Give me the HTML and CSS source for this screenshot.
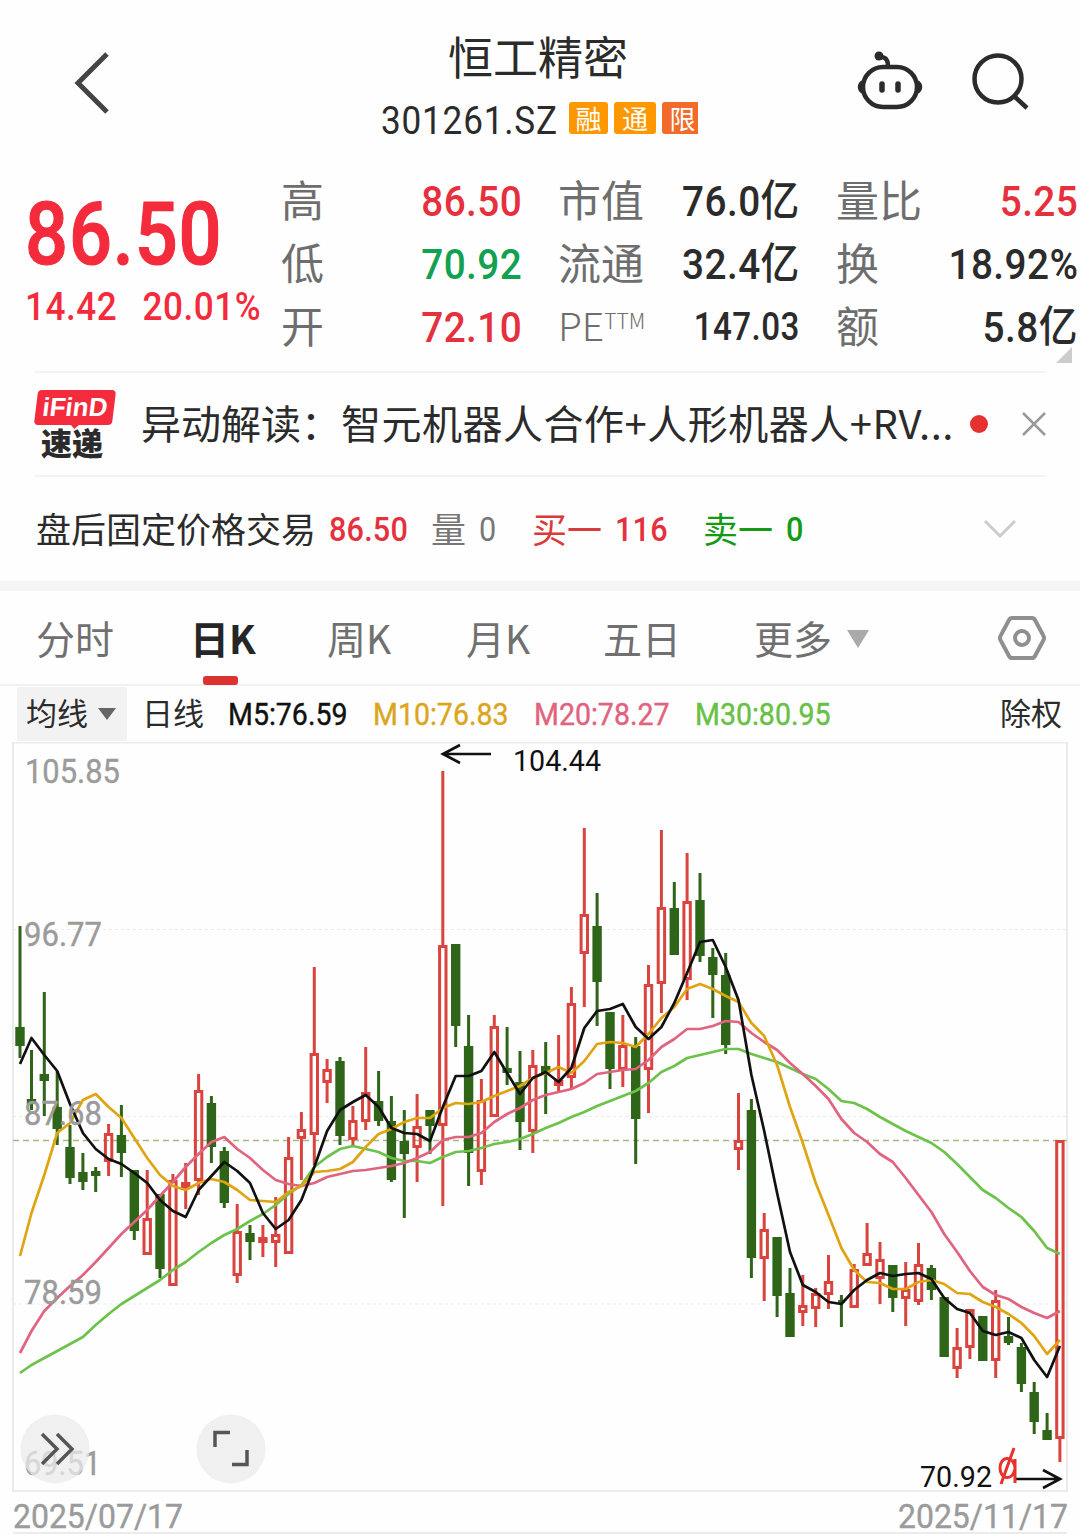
FILE: index.html
```html
<!DOCTYPE html>
<html lang="zh-CN">
<head>
    <meta charset="UTF-8">
    <meta name="viewport" content="width=device-width, initial-scale=1.0">
    <title>恒工精密 301261.SZ</title>
    <link rel="stylesheet" href="styles.css">
</head>
<body>
    <header class="header">
        <svg class="back" width="40" height="64" viewBox="0 0 40 64"><path d="M35 3L6 32l29 29"/></svg>
        <div class="title">
            <h1>恒工精密</h1>
            <div class="code">
                <span class="num">301261.SZ</span>
                <span class="tag">融</span>
                <span class="tag">通</span>
                <span class="tag tag-limit">限</span>
            </div>
        </div>
        <div class="actions">
            <svg width="66" height="60" viewBox="0 0 66 60">
                <rect x="6" y="16" width="54" height="40" rx="20"/>
                <path d="M31 15c0-6-2-9-8-9"/>
                <circle class="solid" cx="22" cy="5" r="4.500"/>
                <path class="solid" d="M6 29c-7 2-7 12 0 14zM60 29c7 2 7 12 0 14z"/>
                <path class="eye" d="M25 33v6M41 33v6"/>
            </svg>
            <svg width="60" height="60" viewBox="0 0 60 60">
                <circle cx="27" cy="28" r="23.500"/>
                <path d="M43 45l13 12"/>
            </svg>
        </div>
    </header>

    <section class="quote">
        <div class="price">
            <div class="last num">86.50</div>
            <div class="change num"><span>14.42</span><span>20.01%</span></div>
        </div>
        <dl class="stats">
            <div><dt>高</dt><dd class="num up">86.50</dd></div>
            <div><dt>市值</dt><dd class="num">76.0亿</dd></div>
            <div><dt>量比</dt><dd class="num up">5.25</dd></div>
            <div><dt>低</dt><dd class="num down">70.92</dd></div>
            <div><dt>流通</dt><dd class="num">32.4亿</dd></div>
            <div><dt>换</dt><dd class="num">18.92%</dd></div>
            <div><dt>开</dt><dd class="num up">72.10</dd></div>
            <div><dt class="pe">PE<sup>TTM</sup></dt><dd class="num small">147.03</dd></div>
            <div><dt>额</dt><dd class="num">5.8亿</dd></div>
        </dl>
        <i class="corner"></i>
    </section>

    <section class="news">
        <div class="logo"><b>iFinD</b><span>速递</span></div>
        <p>异动解读：<span>智元机器人合作+人形机器人+RV...</span></p>
        <i class="dot"></i>
        <svg class="close" width="24" height="24" viewBox="0 0 24 24"><path d="M1 1l22 22M23 1L1 23"/></svg>
    </section>

    <section class="after">
        <span>盘后固定价格交易</span>
        <span class="num up">86.50</span>
        <span class="muted">量</span>
        <span class="num muted">0</span>
        <span class="buy">买一</span>
        <span class="num up">116</span>
        <span class="sell">卖一</span>
        <span class="num sell">0</span>
        <svg width="36" height="22" viewBox="0 0 36 22"><path d="M3 3l15 15L33 3"/></svg>
    </section>

    <nav class="tabs">
        <a>分时</a>
        <a class="active">日K</a>
        <a>周K</a>
        <a>月K</a>
        <a>五日</a>
        <a>更多<i class="caret"></i></a>
        <svg width="48" height="46" viewBox="0 0 48 46">
            <path d="M14 3h20q2 0 3 2l8 15q2 3 0 6l-8 15q-1 2-3 2H14q-2 0-3-2L3 26q-2-3 0-6l8-15q1-2 3-2z"/>
            <circle cx="24" cy="23" r="7"/>
        </svg>
    </nav>

    <div class="legend">
        <span class="select">均线<i class="caret"></i></span>
        <span>日线</span>
        <span class="num m5">M5:76.59</span>
        <span class="num m10">M10:76.83</span>
        <span class="num m20">M20:78.27</span>
        <span class="num m30">M30:80.95</span>
        <span>除权</span>
    </div>

    <svg class="chart" id="chart" width="1080" height="792" viewBox="0 742 1080 792">
        <g class="frame">
            <path d="M13 742.500H1067V1491H13zM13 1533H1067"/>
            <path class="grid" d="M13 929.500H1067M13 1116.500H1067M13 1304H1067"/>
            <path class="now" d="M13 1140.500H1067"/>
        </g>
        <g id="candles"></g>
        <g id="lines"></g>
        <g class="axis">
            <text x="25" y="783" textLength="95" lengthAdjust="spacingAndGlyphs">105.85</text>
            <text x="24" y="946" textLength="78" lengthAdjust="spacingAndGlyphs">96.77</text>
            <text x="24" y="1125" textLength="78" lengthAdjust="spacingAndGlyphs">87.68</text>
            <text x="24" y="1304" textLength="78" lengthAdjust="spacingAndGlyphs">78.59</text>
            <text x="24" y="1475" textLength="77" lengthAdjust="spacingAndGlyphs">69.51</text>
            <text x="13" y="1528" textLength="170" lengthAdjust="spacingAndGlyphs">2025/07/17</text>
            <text x="898" y="1528" textLength="170" lengthAdjust="spacingAndGlyphs">2025/11/17</text>
        </g>
        <g class="mark">
            <text x="513" y="771" textLength="88" lengthAdjust="spacingAndGlyphs">104.44</text>
            <path d="M491 754H443M460 745L443 754l17 9"/>
            <text x="920" y="1487" textLength="72" lengthAdjust="spacingAndGlyphs">70.92</text>
            <path d="M1015 1479h44M1043 1470l17 9-17 9"/>
        </g>
        <path class="event" d="M1001 1484L1014 1448M1015 1459V1483M1015 1467C1012 1454 1000 1457 1000 1468S1012 1482 1015 1469"/>
        <g class="tool">
            <circle cx="55" cy="1449" r="34.500"/>
            <path d="M42 1434l15 15-15 15M57 1434l15 15-15 15"/>
            <circle cx="231" cy="1449" r="34.500"/>
            <path d="M215 1447V1432.500H230M247 1450V1464.500H232"/>
        </g>
    </svg>
    <script src="chart.js"></script>
</body>
</html>
```
FILE: styles.css
```css
* {
    box-sizing: border-box;
}
body {
    margin: 0;
    width: 1080px;
    height: 1534px;
    overflow: hidden;
    background: #fefefe;
    color: #2b2b2b;
    font-family: "Noto Sans CJK SC", sans-serif;
}
svg {
    display: block;
    fill: none;
}
/* digits are set slightly condensed */
.num {
    font-family: Roboto, "Noto Sans CJK SC", sans-serif;
    font-weight: 500;
    white-space: nowrap;
    transform: scaleX(0.9);
    transform-origin: left;
}
.up {
    color: #e5303e;
}
.down {
    color: #12a150;
}
.caret {
    display: inline-block;
    border: 11px solid transparent;
    border-top: 18px solid #aaa;
    border-bottom: 0;
}

/* header */
.header {
    display: grid;
    grid-template-columns: 340px 400px 1fr;
    height: 170px;
}
.back {
    margin: 51px 0 0 72px;
    stroke: #444;
    stroke-width: 5;
}
.title {
    padding-top: 26px;
    text-align: center;
}
.title h1 {
    margin: 0 4px 0 0;
    font-size: 45px;
    font-weight: 400;
    line-height: 60px;
}
.code {
    display: flex;
    align-items: center;
    height: 64px;
    padding-left: 41px;
}
.code .num {
    width: 188px;
    padding-top: 5px;
    font-size: 39px;
    font-weight: 400;
    letter-spacing: 0.9px;
    text-align: left;
}
.tag {
    width: 39px;
    height: 32px;
    margin-right: 6px;
    border-radius: 3px;
    background: #ff9800;
    color: #fff;
    font-size: 26px;
    line-height: 31px;
}
.tag:nth-child(3) {
    width: 42px;
}
.tag-limit {
    width: 36px;
    margin-right: 0;
    padding-left: 5px;
    border-radius: 3px 0 0 3px;
    background: #f26b2b;
}
.actions {
    display: flex;
    gap: 48px;
    padding: 51px 0 0 117px;
    stroke: #2b2b2b;
    stroke-width: 4.5;
}
.actions .solid {
    fill: #2b2b2b;
    stroke: none;
}
.actions .eye {
    stroke-width: 5.5;
    stroke-linecap: round;
}

/* quote */
.quote {
    position: relative;
    display: flex;
    height: 201px;
    padding-left: 25px;
}
.price {
    width: 256px;
    padding-top: 18px;
    color: #f32b3c;
}
.last {
    font-size: 87px;
    letter-spacing: 1px;
    line-height: 92px;
    transform: scaleX(0.87);
    -webkit-text-stroke: 1.2px;
}
.change {
    display: flex;
    gap: 28px;
    font-size: 39px;
    letter-spacing: 0.6px;
    line-height: 54px;
}
.stats {
    display: grid;
    grid-template-columns: 241px 242px 242px;
    grid-auto-rows: 63px;
    column-gap: 36px;
    margin: 0;
}
.stats div {
    display: flex;
    align-items: center;
    justify-content: space-between;
    line-height: 63px;
}
.stats dt {
    margin-top: -6px;
    color: #6e6e6e;
    font-size: 43px;
}
.stats dd {
    margin: 0;
    font-size: 43px;
    letter-spacing: 0.5px;
    transform-origin: right;
}
.stats .small {
    font-size: 39px;
    transform: scaleX(0.85);
}
.stats .pe {
    font-size: 39px;
    font-weight: 300;
}
.pe sup {
    font-size: 21px;
    line-height: 0;
    vertical-align: 12px;
}
.corner {
    position: absolute;
    right: 8px;
    bottom: 8px;
    border: 8px solid;
    border-color: transparent #ccc #ccc transparent;
}

/* news */
.news {
    display: flex;
    align-items: center;
    height: 106px;
    margin: 0 34px 0 35px;
    border-top: 2px solid #f3f3f3;
    border-bottom: 2px solid #f3f3f3;
}
.logo {
    flex: none;
    width: 81px;
    margin-right: 25px;
}
.logo b {
    display: block;
    width: 78px;
    height: 35px;
    margin-left: 1px;
    border-radius: 4px;
    background: #f32b3c;
    color: #fff;
    font: 700 26px/35px "Liberation Sans", sans-serif;
    text-align: center;
    transform: skewX(-7deg);
}
.logo b::after {
    content: "";
    position: absolute;
    left: 36px;
    top: 34px;
    border: 5px solid transparent;
    border-top-color: #f32b3c;
    border-bottom: 0;
}
.logo span {
    display: block;
    padding-left: 6px;
    font-size: 31px;
    font-weight: 900;
    line-height: 34px;
}
.news p {
    flex: none;
    width: 814px;
    margin: -5px 0 0;
    font-size: 40px;
    white-space: nowrap;
}
.news p span {
    letter-spacing: 0.5px;
}
.dot {
    flex: none;
    width: 18px;
    height: 18px;
    margin: 0 34px 0 15px;
    border-radius: 50%;
    background: #e53230;
}
.close {
    flex: none;
    stroke: #999;
    stroke-width: 2.5;
}

/* after-hours */
.after {
    display: grid;
    grid-template-columns: 293px 102px 48px 53px 83px 88px 83px 196px 36px;
    align-items: center;
    height: 114px;
    padding-left: 36px;
    border-bottom: 10px solid #f4f4f4;
    font-size: 35px;
    white-space: nowrap;
}
.after > span:not(.num) {
    margin-top: -4px;
}
.after .num {
    font-size: 34px;
    letter-spacing: 0.2px;
}
.after .muted {
    color: #777;
    font-weight: 400;
}
.after .buy {
    color: #d93a3a;
}
.after .sell {
    color: #149a14;
}
.after svg {
    stroke: #ccc;
    stroke-width: 3;
}

/* tabs */
.tabs {
    display: grid;
    grid-template-columns: 154px 137px 139px 137px 151px 244px 48px;
    align-items: center;
    height: 95px;
    padding-left: 36px;
    border-bottom: 2px solid #f1f1f1;
}
.tabs a {
    position: relative;
    color: #707070;
    font-size: 39px;
    line-height: 93px;
}
.tabs .active {
    color: #262626;
    font-weight: 700;
}
.tabs .active::after {
    content: "";
    position: absolute;
    left: 13px;
    bottom: -1px;
    width: 35px;
    height: 9px;
    border-radius: 3px;
    background: #dc3232;
}
.tabs .caret {
    margin: 0 0 6px 15px;
}
.tabs svg {
    stroke: #8f8f8f;
    stroke-width: 4;
}

/* moving averages */
.legend {
    display: grid;
    grid-template-columns: 125px 86px 145px 161px 161px 305px auto;
    align-items: center;
    height: 56px;
    padding-left: 17px;
    font-size: 31px;
    white-space: nowrap;
}
.legend > span:not(.num) {
    line-height: 50px;
    height: 54px;
}
.legend .num {
    font-weight: 400;
    transform: scaleX(0.92);
    -webkit-text-stroke: 0.4px;
}
.legend .select {
    width: 110px;
    height: 50px;
    padding-left: 9px;
    background: #f2f2f2;
    line-height: 47px;
}
.select .caret {
    margin: 0 0 5px 10px;
    border-width: 12px 9px 0;
    border-top-color: #666;
}
.m5 {
    color: #111;
}
.m10 {
    color: #dba51c;
}
.m20 {
    color: #e0637f;
}
.m30 {
    color: #68c045;
}

/* chart */
.chart {
    font-family: Roboto, sans-serif;
}
.frame {
    stroke: #ebebeb;
    stroke-width: 2;
}
.frame .grid {
    stroke-width: 1;
    stroke-dasharray: 3 3;
}
.frame .now {
    stroke: #a9b584;
    stroke-width: 1.5;
    stroke-dasharray: 6 4;
}
.candle-up {
    stroke: #d9443f;
    stroke-width: 3;
}
.candle-down {
    fill: #2f6518;
    stroke: #2f6518;
    stroke-width: 3;
}
.line {
    stroke-width: 2.7;
    stroke-linejoin: round;
}
.line-5 {
    stroke: #111;
}
.line-10 {
    stroke: #e0a412;
}
.line-20 {
    stroke: #e0637f;
}
.line-30 {
    stroke: #6cc24a;
}
.axis {
    fill: #9b9b9b;
    font-size: 34px;
    stroke: #9b9b9b;
    stroke-width: 0.4;
}
.axis text:nth-child(n+6) {
    font-size: 33px;
}
.mark {
    fill: #111;
    font-size: 30px;
}
.mark path {
    fill: none;
    stroke: #111;
    stroke-width: 2.7;
}
.event {
    stroke: #e8302c;
    stroke-width: 3;
}
.tool circle {
    fill: #ebebeb;
    fill-opacity: 0.75;
}
.tool path {
    stroke: #555;
    stroke-width: 3.5;
}
```
FILE: chart.js
```javascript
const NS = 'http://www.w3.org/2000/svg';
const X0 = 18.6;
const STEP = 12.856;

// [up, high, body top, body bottom, low]
const candles = [
    [0,926,1027,1046,1058],[0,1050,1099,1104,1110],[0,992,1074,1081,1116],[0,1071,1107,1129,1145],
    [0,1125,1147,1178,1184],[0,1153,1172,1182,1190],[0,1167,1171,1176,1192],[1,1124,1133,1162,1176],
    [0,1105,1135,1153,1177],[0,1170,1170,1231,1240],[1,1170,1218,1255,1255],[0,1194,1194,1269,1278],
    [1,1174,1180,1286,1286],[1,1163,1182,1188,1209],[1,1074,1090,1181,1195],[0,1096,1103,1147,1163],
    [0,1147,1151,1203,1208],[1,1204,1231,1276,1283],[0,1225,1233,1242,1260],[1,1225,1237,1243,1257],
    [1,1197,1234,1243,1267],[1,1137,1157,1254,1254],[1,1112,1129,1139,1180],[1,967,1053,1135,1165],
    [1,1059,1069,1083,1103],[0,1057,1061,1136,1145],[1,1106,1120,1140,1145],[1,1047,1092,1122,1130],
    [0,1071,1101,1121,1126],[0,1096,1121,1180,1182],[0,1110,1141,1154,1218],[1,1094,1126,1148,1182],
    [0,1110,1110,1126,1154],[1,771,945,1126,1206],[0,944,944,1026,1047],[0,1015,1046,1153,1186],
    [1,1079,1100,1172,1185],[1,1015,1026,1117,1117],[0,1027,1068,1073,1085],[0,1051,1082,1122,1150],
    [1,1050,1065,1132,1153],[0,1042,1066,1073,1114],[1,1035,1080,1086,1091],[1,987,1003,1078,1088],
    [1,828,914,954,1007],[0,893,926,982,1026],[0,1012,1012,1069,1089],[1,1015,1045,1070,1087],
    [0,1037,1046,1119,1164],[1,965,984,1070,1113],[1,830,907,984,1013],[0,882,908,955,955],
    [1,853,901,980,1000],[0,873,900,956,962],[0,948,957,975,1018],[0,953,975,1045,1054],
    [1,1093,1140,1150,1170],[0,1099,1110,1258,1278],[1,1213,1229,1259,1301],[0,1237,1237,1296,1317],
    [0,1268,1293,1337,1337],[1,1275,1305,1313,1326],[1,1288,1293,1309,1327],[1,1255,1281,1295,1309],
    [0,1295,1300,1303,1327],[1,1264,1269,1308,1308],[1,1223,1253,1266,1266],[1,1242,1259,1279,1304],
    [0,1265,1265,1298,1312],[1,1262,1289,1299,1326],[1,1243,1264,1302,1305],[0,1265,1268,1290,1300],
    [0,1297,1297,1357,1357],[1,1328,1347,1369,1378],[1,1309,1309,1348,1359],[0,1316,1316,1361,1361],
    [1,1290,1300,1361,1378],[0,1317,1336,1343,1345],[0,1343,1347,1384,1392],[0,1382,1392,1422,1434],
    [0,1413,1430,1440,1440],[1,1140,1140,1439,1462]
];

const averages = {
    30: [1373,1365,1358,1351,1344,1337,1325,1314,1304,1296,1288,1280,1270,1262,1252,1243,1235,1229,1221,1214,
        1205,1194,1185,1167,1157,1149,1146,1149,1152,1158,1161,1161,1163,1157,1152,1151,1148,1144,1142,1139,
        1134,1128,1123,1117,1112,1106,1101,1096,1091,1083,1072,1066,1058,1055,1052,1049,1049,1054,1058,1062,
        1068,1074,1079,1089,1101,1103,1109,1117,1124,1131,1137,1143,1152,1164,1177,1190,1198,1208,1217,1231,
        1248,1254],
    20: [1353,1331,1311,1298,1286,1275,1262,1248,1234,1222,1210,1196,1182,1167,1154,1142,1137,1149,1158,1170,
        1180,1184,1186,1183,1177,1174,1171,1170,1168,1166,1163,1158,1152,1140,1137,1137,1133,1122,1114,1108,
        1100,1095,1092,1089,1083,1074,1072,1070,1069,1060,1047,1039,1029,1029,1026,1021,1022,1033,1042,1050,
        1063,1074,1086,1099,1119,1133,1142,1154,1162,1178,1195,1212,1234,1252,1271,1287,1295,1299,1307,1313,
        1318,1311],
    10: [1256,1213,1175,1133,1123,1100,1094,1107,1118,1138,1158,1175,1186,1190,1183,1179,1182,1190,1200,1201,
        1202,1192,1186,1172,1171,1169,1162,1147,1134,1129,1122,1118,1118,1108,1103,1104,1102,1096,1091,1086,
        1078,1073,1067,1073,1061,1044,1042,1043,1047,1034,1018,1007,989,984,989,996,1002,1023,1036,1065,
        1107,1143,1183,1215,1248,1270,1282,1283,1289,1289,1282,1280,1284,1293,1294,1302,1307,1314,1323,1336,
        1354,1340],
    5: [1064,1038,1055,1071,1104,1133,1149,1159,1164,1173,1183,1200,1211,1217,1190,1176,1162,1171,1183,1213,
        1229,1220,1200,1167,1131,1110,1102,1095,1107,1128,1133,1134,1141,1107,1076,1076,1071,1052,1073,1094,
        1078,1072,1082,1068,1028,1011,1009,1004,1027,1039,1027,1003,973,942,940,967,1000,1075,1131,1193,
        1252,1285,1292,1302,1304,1290,1280,1273,1276,1274,1273,1279,1298,1309,1313,1331,1335,1332,1338,1360,
        1377,1346]
};

function addPath(parent, className, d) {
    const path = document.createElementNS(NS, 'path');
    path.setAttribute('class', className);
    path.setAttribute('d', d);
    document.getElementById(parent).appendChild(path);
}

function xAt(i) {
    return i === 0 ? 20 : X0 + STEP * i;
}

candles.forEach(([up, high, top, bottom, low], i) => {
    const x = xAt(i).toFixed(1);
    const body = `M${x - 3.2} ${top + 1.5}h6.4V${bottom - 1.5}h-6.4z`;
    addPath('candles', up ? 'candle-up' : 'candle-down', `M${x} ${high}V${top}M${x} ${bottom}V${low}${body}`);
});

Object.entries(averages).reverse().forEach(([days, values]) => {
    const points = values.map((y, i) => `${xAt(i).toFixed(1)} ${y}`);
    addPath('lines', `line line-${days}`, 'M' + points.join('L'));
});
```
